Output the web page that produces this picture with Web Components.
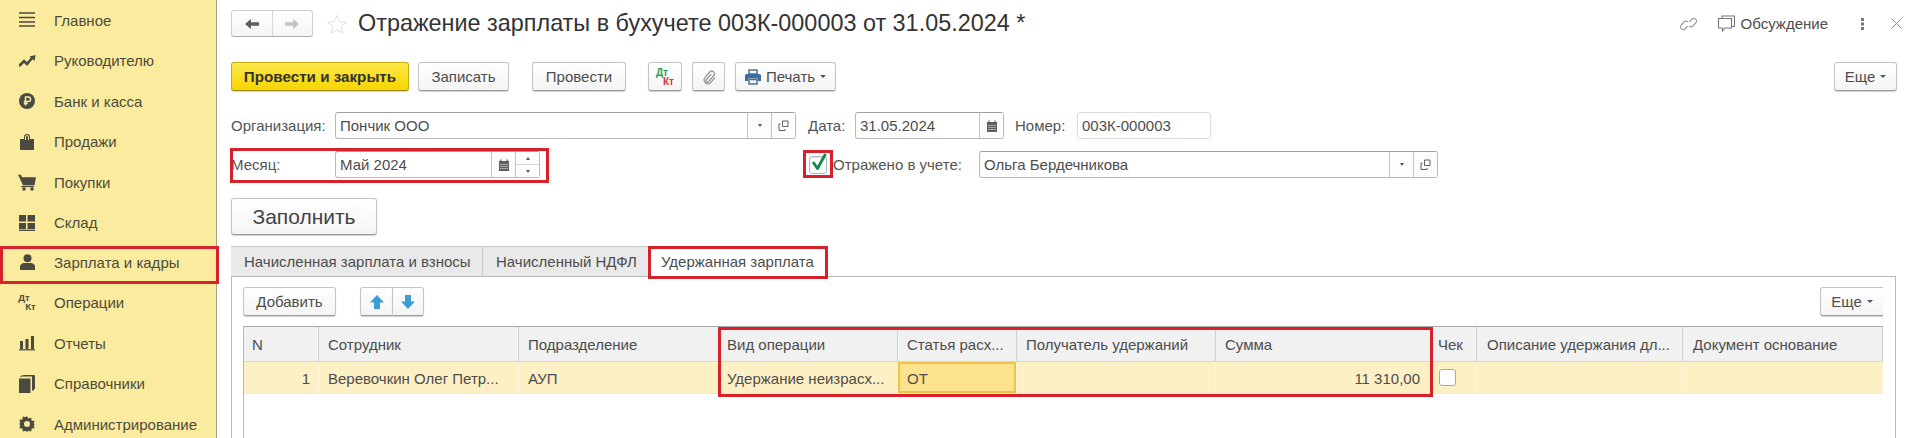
<!DOCTYPE html>
<html lang="ru">
<head>
<meta charset="utf-8">
<title>Отражение зарплаты в бухучете</title>
<style>
    html, body { margin: 0; height: 100%; overflow: hidden; background: #fff; }
    body { font: 15px "Liberation Sans", Arial, sans-serif; color: #4b4b4b; }
</style>
</head>
<body>
<app-page></app-page>
<script>
const ICONS = {
    menu: `<path d="M0 1h16M0 5.500h16M0 10h16M0 14h16" stroke="currentColor" stroke-width="1.300" fill="none"/>`,
    trend: `<path d="M0 13l5-5 3 3 5-6" stroke="currentColor" stroke-width="2.600" fill="none"/><path d="M10.500 3.500l6-1.500-1 6z" fill="currentColor"/>`,
    ruble: `<circle cx="8" cy="8" r="8" fill="currentColor"/><path d="M6.500 12.500V4h2.800a2.200 2.200 0 010 4.500H4.800M4.800 10.500h4" stroke="#fbeb9e" stroke-width="1.500" fill="none"/>`,
    bag: `<path d="M0 5h4V3a3 3 0 016 0v2h4v11H0z" fill="currentColor"/><path d="M5.500 6V3a1.500 1.500 0 013 0v3" stroke="#fbeb9e" stroke-width="1" fill="none"/>`,
    cart: `<path d="M0 .8h3l1 2.500h14l-1.500 8H5z" fill="currentColor"/><path d="M3.200 12.500H16" stroke="currentColor" stroke-width="1.300"/><circle cx="6" cy="15" r="1.800" fill="currentColor"/><circle cx="14" cy="15" r="1.800" fill="currentColor"/>`,
    stock: `<path d="M0 0h7v6.500H0zM8.500 0H16v6.500H8.500zM0 8h7v6H0zM8.500 8H16v6H8.500z" fill="currentColor"/><path d="M0 15.300h16" stroke="currentColor" stroke-width="1.300"/>`,
    person: `<circle cx="7.500" cy="4.300" r="4" fill="currentColor"/><path d="M0 16v-3.500c0-2 2.500-3.500 4.500-3.500h6c2 0 4.500 1.500 4.500 3.500V16z" fill="currentColor"/>`,
    bars: `<path d="M1 5h3v8H1zM6.500 3h3v10h-3zM12 0h3v13h-3z" fill="currentColor"/><path d="M0 13.800h16" stroke="currentColor" stroke-width="1.200"/>`,
    stack: `<path d="M0 3.500h11.500V18H0z" fill="currentColor"/><path d="M2 2.200V1h11.500v14.500M14.500 1v14.500M4 .5h11.500V14" stroke="currentColor" stroke-width="1" fill="none"/>`,
    gear: `<path d="M8 0l1.300 2.600 2.900-.9.400 3 3 .4-.9 2.900L16 8l-1.300 1.300.9 2.900-3 .4-.4 3-2.900-.9L8 16l-1.300-1.300-2.900.9-.4-3-3-.4.9-2.900L0 8l1.300-1.300-.9-2.900 3-.4.400-3 2.900.9z" fill="currentColor"/><circle cx="8" cy="8" r="3" fill="#fbeb9e"/>`,
    back: `<path d="M1 7l6-5v3.300h8v3.400H7V12z" fill="currentColor"/>`,
    fwd: `<path d="M15 7L9 2v3.300H1v3.400h8V12z" fill="currentColor"/>`,
    star: `<path d="M10 1.500l2.600 6.300 6.700.5-5.100 4.400 1.600 6.600L10 15.800l-5.800 3.500 1.600-6.600L.7 8.300l6.700-.5z" fill="none" stroke="#dedede" stroke-width="1"/>`,
    clip: `<path d="M12 5l-6.500 7.500a2 2 0 003 2.600l7-8.300a3.500 3.500 0 00-5.300-4.500L3.300 10.500a5 5 0 007.500 6.200l5.700-6.700" fill="none" stroke="#9a9a9a" stroke-width="1.700"/>`,
    print: `<path d="M4 1h8v4H4z" fill="none" stroke="#51708e" stroke-width="1.500"/><path d="M0 6.500a1.500 1.500 0 011.500-1.500h13A1.500 1.500 0 0116 6.500V12h-3V9.500H3V12H0z" fill="#3a6f9f"/><path d="M4 10.500h8V15H4z" fill="none" stroke="#51708e" stroke-width="1.500"/>`,
    open: `<path d="M4.500 1h5.500v5.500H4.500z" fill="none" stroke="currentColor" stroke-width="1"/><path d="M2.500 4H1v6.500h6V9" fill="none" stroke="currentColor" stroke-width="1"/>`,
    cal: `<path d="M1 2h10v10H1z" fill="currentColor"/><path d="M3 .5v2M9 .5v2" stroke="currentColor" stroke-width="1.200"/><path d="M2.500 5.500h7M2.500 7.500h7M2.500 9.500h7" stroke="#f1f1f1" stroke-width="1" stroke-dasharray="1 1"/>`,
    link: `<path d="M7.500 11l-2.600 3a2.700 2.700 0 01-4-3.500l3-3.500a2.700 2.700 0 014 0M9.500 7l2.600-3a2.700 2.700 0 014 3.500l-3 3.500a2.700 2.700 0 01-4 0" fill="none" stroke="#9c9c9c" stroke-width="1.200"/>`,
    chat: `<path d="M5 3V1h12.500v10.500H15" fill="none" stroke="#777" stroke-width="1.100"/><path d="M1.500 3.500H14.500V13H8l-2.500 3v-3H1.500z" fill="none" stroke="#777" stroke-width="1.100"/>`,
    kebab: `<path d="M0 0h3v3H0zM0 4.500h3v3H0zM0 9h3v3H0z" fill="#777"/>`,
    close: `<path d="M.5.500l10 10M10.500.500l-10 10" stroke="#8c8c8c" stroke-width="1" fill="none"/>`,
    check: `<path d="M2 9l4.500 6.500L14.500 1" stroke="#11894f" stroke-width="2.800" fill="none"/>`,
    up: `<path d="M7 0l7 7.500H10V14H4V7.500H0z" fill="#3d9bd6"/>`,
    down: `<path d="M7 14L0 6.500h4V0h6v6.500h4z" fill="#3d9bd6"/>`
};

function icon(name, w, h, vb) {
    return `<svg width="${w}" height="${h}" viewBox="${vb || `0 0 ${w} ${h}`}" aria-hidden="true">${ICONS[name]}</svg>`;
}

const DTKT = (size, shift, colored) => `<span style="display:inline-flex;flex-direction:column;font:bold ${size}px/${size - 1}px 'Liberation Sans',sans-serif"><span style="${colored ? "color:#1d9a57" : ""}">Дт</span><span style="margin-left:${shift}px;${colored ? "color:#d8343c" : ""}">Кт</span></span>`;

class BaseElement extends HTMLElement {
    constructor() {
        super();
        this.attachShadow({ mode: "open" });
    }
    connectedCallback() {
        this.shadowRoot.innerHTML = this.markup();
    }
}

// red frame over whatever it wraps, the offsets come from css variables
class RedMark extends BaseElement {
    markup() {
        return `<style>
            :host { display: flex; position: relative; }
            .frame {
                position: absolute; pointer-events: none; z-index: 5;
                border: 3px solid #d9212c; box-sizing: border-box;
                top: var(--t, 0); left: var(--l, 0); right: var(--r, 0); bottom: var(--b, 0);
            }
        </style><slot></slot><div class="frame"></div>`;
    }
}
customElements.define("red-mark", RedMark);

class NavItem extends BaseElement {
    markup() {
        const ic = this.getAttribute("icon");
        const [w, h] = (this.getAttribute("size") || "16,16").split(",");
        const glyph = ic === "dtkt" ? DTKT(9.5, 7) : icon(ic, w, h);
        return `<style>
            :host { display: flex; align-items: center; height: 40.500px; color: #4c4b3c; font-size: 15px; }
            .ic { width: 54px; display: flex; justify-content: center; box-sizing: border-box; color: #4a4a40; }
        </style><div class="ic">${glyph}</div><slot></slot>`;
    }
}
customElements.define("nav-item", NavItem);

class SideNav extends BaseElement {
    markup() {
        return `<style>
            :host { display: block; flex: none; width: 216px; height: 100%; background: #fbeb9e; border-right: 1px solid #a8a27c; }
            nav-item:first-child { margin-top: -1px; }
            red-mark { --t: 3px; --b: -1px; --r: -3px; }
        </style>
        <nav-item icon="menu">Главное</nav-item>
        <nav-item icon="trend" size="17,16">Руководителю</nav-item>
        <nav-item icon="ruble">Банк и касса</nav-item>
        <nav-item icon="bag" size="14,16">Продажи</nav-item>
        <nav-item icon="cart" size="18,17">Покупки</nav-item>
        <nav-item icon="stock">Склад</nav-item>
        <red-mark><nav-item icon="person" size="15,16" style="width:100%">Зарплата и кадры</nav-item></red-mark>
        <nav-item icon="dtkt">Операции</nav-item>
        <nav-item icon="bars" size="16,15">Отчеты</nav-item>
        <nav-item icon="stack" size="16,18">Справочники</nav-item>
        <nav-item icon="gear">Администрирование</nav-item>`;
    }
}
customElements.define("side-nav", SideNav);

class UiButton extends BaseElement {
    markup() {
        return `<style>
            :host {
                display: inline-flex; align-items: center; justify-content: center; gap: 5px;
                box-sizing: border-box; height: 29px; flex: none; font-size: 15px; color: #4d4d4d;
                border: 1px solid #c4c4c4; border-bottom-color: #9e9e9e; border-radius: 3px;
                background: linear-gradient(#fff, #f4f4f4); box-shadow: 0 1px 1px #cfcfcf;
            }
            :host([primary]) { background: linear-gradient(#fde84a, #f6d500); border-color: #c9ab12; border-bottom-color: #a58c10; color: #333; font-weight: bold; font-size: 15.200px; }
            :host([big]) { height: 37px; font-size: 21px; color: #444; }
            :host([cut]) { border-right: 0; border-radius: 3px 0 0 3px; }
            .caret { width: 0; height: 0; border: 3px solid transparent; border-top: 3px solid #555; border-bottom: 0; }
        </style><slot></slot>${this.hasAttribute("caret") ? `<span class="caret"></span>` : ""}`;
    }
}
customElements.define("ui-btn", UiButton);

class UiField extends BaseElement {
    markup() {
        const cells = (this.getAttribute("cells") || "").split(",").filter(Boolean).map((c) => {
            if (c === "pick") return `<div class="cell"><i class="caret"></i></div>`;
            if (c === "open") return `<div class="cell">${icon("open", 11, 11)}</div>`;
            if (c === "cal") return `<div class="cell">${icon("cal", 12, 12)}</div>`;
            return `<div class="cell spin"><span><i class="caret up"></i></span><span><i class="caret"></i></span></div>`;
        }).join("");
        return `<style>
            :host {
                display: flex; flex: none; box-sizing: border-box; height: 27px; font-size: 15px; color: #4d4d4d;
                border: 1px solid #b9b9b9; border-top-color: #a0a0a0; border-radius: 3px; background: #fff;
            }
            :host([flat]) { border-color: #dcdcdc; }
            .val { flex: 1; padding-left: 4px; line-height: 25px; white-space: nowrap; overflow: hidden; }
            .cell { width: 23px; display: flex; align-items: center; justify-content: center; border-left: 1px solid #c2c2c2; color: #5f5f5f; background: #fdfdfd; }
            .spin { flex-direction: column; align-items: stretch; }
            .spin span { flex: 1; display: flex; align-items: center; justify-content: center; }
            .spin span + span { border-top: 1px solid #d9d9d9; }
            .caret { width: 0; height: 0; border: 2.500px solid transparent; border-top: 3px solid #555; border-bottom: 0; }
            .caret.up { border-top: 0; border-bottom: 3px solid #555; }
        </style><div class="val">${this.getAttribute("value") || ""}</div>${cells}`;
    }
}
customElements.define("ui-field", UiField);

class UiCheck extends BaseElement {
    markup() {
        return `<style>
            :host { display: block; position: relative; box-sizing: border-box; width: 18px; height: 18px; flex: none; background: #fff; border: 1px solid #b5b5b5; border-radius: 3px; box-shadow: inset 0 1px 2px #e2e2e2; }
            svg { position: absolute; left: 1px; top: -4px; }
        </style>${this.hasAttribute("checked") ? icon("check", 16, 17) : ""}`;
    }
}
customElements.define("ui-check", UiCheck);

class TabBar extends BaseElement {
    markup() {
        return `<style>
            :host { display: flex; height: 31px; flex: none; box-sizing: border-box; font-size: 15px; }
            .tab { box-sizing: border-box; background: #e9e9e9; border: 1px solid #c9c9c9; border-bottom: 1px solid #b9b9b9; border-left-width: 0; line-height: 29px; padding-left: 13px; color: #4d4d4d; white-space: nowrap; }
            .tab:first-child { border-left-width: 1px; border-radius: 3px 0 0 0; }
            .tab.on { background: #fff; border: 0; padding-left: 12px; line-height: 31px; }
            .rest { flex: 1; border-bottom: 1px solid #b9b9b9; }
            red-mark { --t: 0; --b: -2px; --l: -1px; }
        </style>
        <div class="tab" style="width:252px">Начисленная зарплата и взносы</div>
        <div class="tab" style="width:166px">Начисленный НДФЛ</div>
        <red-mark><div class="tab on" style="width:179px">Удержанная зарплата</div></red-mark>
        <div class="rest"></div>`;
    }
}
customElements.define("tab-bar", TabBar);

class DataTable extends BaseElement {
    markup() {
        const heads = ["N", "Сотрудник", "Подразделение", "Вид операции", "Статья расх...", "Получатель удержаний", "Сумма", "Чек", "Описание удержания дл...", "Документ основание"];
        const row = ["1", "Веревочкин Олег Петр...", "АУП", "Удержание неизрасх...", "ОТ", "", "11 310,00", "", "", ""];
        const pad = [8, 9, 9, 7, 9, 9, 9, 6, 10, 10];
        const head = heads.map((h, i) => `<div class="h" style="padding-left:${pad[i]}px">${h}</div>`).join("");
        const cells = row.map((c, i) => {
            if (i === 0) return `<div class="c num" style="padding-right:8px">${c}</div>`;
            if (i === 4) return `<div class="c cur" style="padding-left:${pad[i]}px">${c}</div>`;
            if (i === 6) return `<div class="c num" style="padding-right:11px">${c}</div>`;
            if (i === 7) return `<div class="c chk"><span class="box"></span></div>`;
            return `<div class="c" style="padding-left:${pad[i]}px">${c}</div>`;
        }).join("");
        return `<style>
            :host { display: block; flex: 1; border-left: 1px solid #b9b9b9; font-size: 15px; color: #4d4d4d; }
            .grid {
                position: relative; display: grid; border-top: 1px solid #a9a9a9;
                grid-template-columns: 75px 200px 201px 178px 119px 199px 216px 45px 206px 200px;
                grid-template-rows: 35px 32px;
            }
            .h, .c { box-sizing: border-box; white-space: nowrap; overflow: hidden; border-right: 1px solid #dedede; }
            .h { background: #f1f1f1; line-height: 35px; border-bottom: 1px solid #d6d6d6; border-right-color: #cfcfcf; }
            .c { background: #fef0c5; line-height: 33px; border-bottom: 1px solid #e9e9e9; border-right-color: #fff6dc; }
            .num { text-align: right; }
            .cur { background: #fee38f; box-shadow: inset 0 0 0 2px #f2c342; }
            .chk { display: flex; align-items: center; padding-left: 7px; }
            .box { box-sizing: border-box; width: 17px; height: 17px; background: #fff; border: 1px solid #a8a8a8; border-radius: 3px; }
            .mark { grid-area: 1 / 4 / 3 / 8; position: absolute; inset: 0 -1px -3px -2px; border: 3px solid #d9212c; pointer-events: none; }
        </style><div class="grid">${head}${cells}<div class="mark"></div></div>`;
    }
}
customElements.define("data-table", DataTable);

class AppPage extends BaseElement {
    markup() {
        return `<style>
            :host { display: flex; width: 1920px; height: 438px; overflow: hidden; }
            main { flex: 1; min-width: 0; display: flex; flex-direction: column; padding-left: 14px; box-sizing: border-box; }
            .row { display: flex; align-items: center; flex: none; }
            .top { height: 27px; margin-top: 10px; }
            .nav { display: flex; width: 82px; height: 27px; flex: none; box-sizing: border-box; border: 1px solid #cfcfcf; border-bottom-color: #aeaeae; border-radius: 3px; background: linear-gradient(#fff, #f5f5f5); }
            .nav span { flex: 1; display: flex; align-items: center; justify-content: center; color: #5f5f5f; }
            .nav span + span { border-left: 1px solid #d6d6d6; color: #c3c3c3; }
            .star { margin: 0 11px 0 14px; display: flex; }
            h1 { margin: 0; font: 400 23.400px "Liberation Sans", sans-serif; color: #333; white-space: nowrap; }
            .tools { margin-left: auto; display: flex; align-items: center; padding-right: 18px; color: #4d4d4d; font-size: 15px; }
            .bar { height: 29px; margin-top: 25px; padding-right: 23px; }
            .form { height: 27px; font-size: 15px; color: #555; }
            .lbl { flex: none; white-space: nowrap; }
            .pane { flex: 1; display: flex; flex-direction: column; border-right: 1px solid #b9b9b9; border-left: 1px solid #b9b9b9; margin-right: 24px; padding: 10px 12px 0 11px; min-height: 0; }
        </style>
        <side-nav></side-nav>
        <main>
            <div class="row top">
                <div class="nav"><span>${icon("back", 16, 14)}</span><span>${icon("fwd", 16, 14)}</span></div>
                <span class="star">${icon("star", 20, 20)}</span>
                <h1>Отражение зарплаты в бухучете 003К-000003 от 31.05.2024 *</h1>
                <div class="tools">
                    ${icon("link", 17, 18)}
                    <span style="margin-left:20px;display:flex">${icon("chat", 18, 17)}</span>
                    <span style="margin-left:6px">Обсуждение</span>
                    <span style="margin-left:33px;display:flex">${icon("kebab", 3, 12)}</span>
                    <span style="margin-left:27px;display:flex">${icon("close", 11, 11)}</span>
                </div>
            </div>
            <div class="row bar">
                <ui-btn primary style="width:178px">Провести и закрыть</ui-btn>
                <ui-btn style="width:91px;margin-left:9px">Записать</ui-btn>
                <ui-btn style="width:94px;margin-left:23px">Провести</ui-btn>
                <ui-btn style="width:34px;margin-left:22px">${DTKT(10, 7, true)}</ui-btn>
                <ui-btn style="width:33px;margin-left:10px">${icon("clip", 14, 18, "0 0 18 18")}</ui-btn>
                <ui-btn caret style="width:101px;margin-left:10px">${icon("print", 16, 16)}Печать</ui-btn>
                <ui-btn caret style="width:63px;margin-left:auto">Еще</ui-btn>
            </div>
            <div class="row form" style="margin-top:21px">
                <span class="lbl" style="width:104px">Организация:</span>
                <ui-field value="Пончик ООО" cells="pick,open" style="width:461px"></ui-field>
                <span class="lbl" style="margin-left:12px;width:47px">Дата:</span>
                <ui-field value="31.05.2024" cells="cal" style="width:149px"></ui-field>
                <span class="lbl" style="margin-left:11px;width:62px">Номер:</span>
                <ui-field flat value="003К-000003" style="width:134px"></ui-field>
            </div>
            <div class="row form" style="margin-top:12px">
                <red-mark style="--t:-3px;--b:-5px;--l:-1px;--r:-9px;align-items:center">
                    <span class="lbl" style="width:104px">Месяц:</span>
                    <ui-field value="Май 2024" cells="cal,spin" style="width:205px"></ui-field>
                </red-mark>
                <red-mark style="margin-left:269px;--t:-6px;--b:-4px;--l:-6px;--r:-6px">
                    <ui-check checked></ui-check>
                </red-mark>
                <span class="lbl" style="margin-left:6px;width:146px">Отражено в учете:</span>
                <ui-field value="Ольга Бердечникова" cells="pick,open" style="width:459px"></ui-field>
            </div>
            <div class="row" style="margin-top:20px">
                <ui-btn big style="width:146px">Заполнить</ui-btn>
            </div>
            <div style="margin:11px 24px 0 0;flex:none"><tab-bar></tab-bar></div>
            <div class="pane">
                <div class="row" style="height:29px;margin-bottom:10px">
                    <ui-btn style="width:93px">Добавить</ui-btn>
                    <ui-btn cut style="width:32px;margin-left:24px">${icon("up", 14, 14)}</ui-btn>
                    <ui-btn style="width:32px;border-radius:0 3px 3px 0">${icon("down", 14, 14)}</ui-btn>
                    <ui-btn caret style="width:63px;margin-left:auto;border-right:0;border-radius:3px 0 0 3px">Еще</ui-btn>
                </div>
                <data-table></data-table>
            </div>
        </main>`;
    }
}
customElements.define("app-page", AppPage);
</script>
</body>
</html>
